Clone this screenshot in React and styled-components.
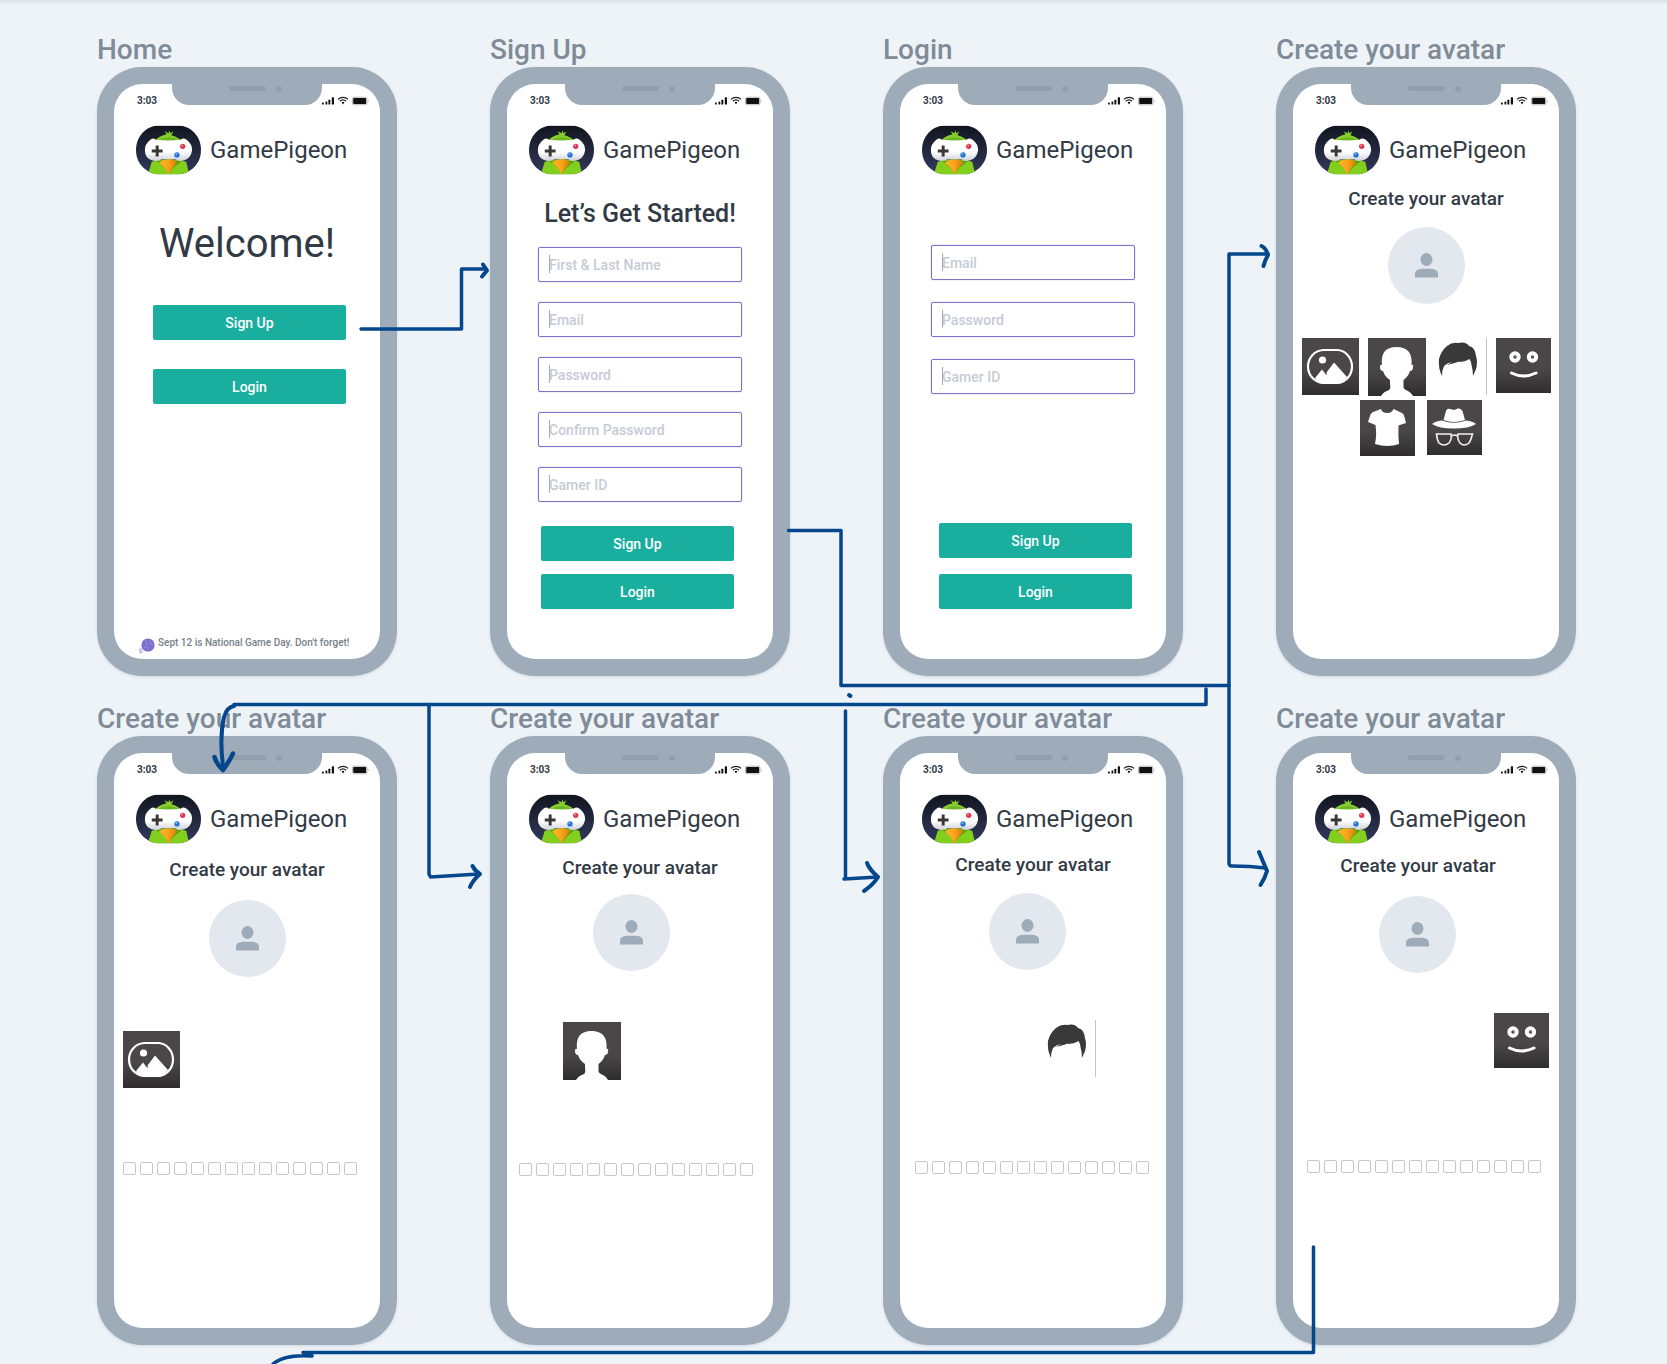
import React from "react";
import styled, { createGlobalStyle } from "styled-components";

const color = {
  canvas: "#eef3f7",
  frame: "#9eacba",
  frameDetail: "#919fad",
  label: "#808b98",
  ink: "#323a45",
  teal: "#1aae9f",
  violet: "#7f70cc",
  hint: "#c5cbd5",
  line: "#05478d",
};

const GlobalStyle = createGlobalStyle`
  * { box-sizing: border-box; }
  body {
    margin: 0;
    background: ${color.canvas};
    font-family: Roboto, "Liberation Sans", sans-serif;
    color: ${color.ink};
  }
  h1, h2, p { margin: 0; font-weight: 500; }
`;

const Board = styled.main`
  position: relative;
  overflow: hidden;
  padding: 29px 91px 19px 97px;
  background: linear-gradient(#dde2e6, ${color.canvas} 5px);
`;

const Frames = styled.div`
  display: grid;
  grid-template-columns: repeat(4, 300px);
  justify-content: space-between;
  row-gap: 22px;
`;

const FrameLabel = styled.h2`
  height: 38px;
  line-height: 41px;
  font-size: 28px;
  color: ${color.label};
  white-space: nowrap;
`;

const Phone = styled.div`
  height: 609px;
  padding: 17px;
  border-radius: 45px;
  background: ${color.frame};
  box-shadow: 0 1px 3px rgba(120, 140, 170, 0.25);
`;

const Screen = styled.div`
  display: flex;
  flex-direction: column;
  height: 100%;
  border-radius: 28px;
  overflow: hidden;
  background: #fff;
`;

const StatusBar = styled.div`
  display: grid;
  grid-template-columns: 1fr 150px 1fr;
  height: 41px;
`;

const Time = styled.span`
  padding-left: 23px;
  line-height: 34px;
  font-size: 10px;
  font-weight: 700;
`;

const Notch = styled.div`
  display: flex;
  justify-content: flex-end;
  gap: 10px;
  height: 21px;
  padding: 2px 40px 0 0;
  border-radius: 0 0 17px 17px;
  background: ${color.frame};
`;

const Speaker = styled.i`
  width: 37px;
  height: 5px;
  border-radius: 3px;
  background: ${color.frameDetail};
`;

const Camera = styled.i`
  width: 6px;
  height: 6px;
  border-radius: 50%;
  background: ${color.frameDetail};
`;

const Signals = styled.div`
  padding-top: 12px;
  svg { display: block; }
`;

const Brand = styled.div`
  display: flex;
  align-items: center;
  gap: 9px;
  height: 50px;
  padding-left: 22px;
  font-size: 24px;
  svg { display: block; }
`;

const Heading = styled.h1`
  margin-top: ${(p) => p.$top}px;
  padding-right: ${(p) => p.$right || 0}px;
  font-size: ${(p) => p.$size}px;
  font-weight: ${(p) => (p.$size > 30 ? 400 : 500)};
  line-height: ${(p) => p.$size + 8}px;
  text-align: center;
  white-space: nowrap;
`;

const Fields = styled.form`
  display: flex;
  flex-direction: column;
  gap: ${(p) => p.$gap}px;
  margin: ${(p) => p.$top}px 31px 0;
`;

const Field = styled.label`
  position: relative;
  display: block;
  height: 35px;
  &::before {
    content: "";
    position: absolute;
    left: 11px;
    top: 8px;
    width: 1px;
    height: 18px;
    background: #a4abb6;
  }
`;

const TextInput = styled.input`
  display: block;
  width: 100%;
  height: 100%;
  padding: 0 10px;
  border: 1px solid ${color.violet};
  border-radius: 2px;
  box-shadow: 0 0 1px ${color.violet};
  background: transparent;
  font: 500 14px Roboto, "Liberation Sans", sans-serif;
  color: ${color.ink};
  outline: none;
  &::placeholder { color: ${color.hint}; opacity: 1; }
`;

const Actions = styled.div`
  display: flex;
  flex-direction: column;
  gap: ${(p) => p.$gap}px;
  margin: ${(p) => p.$top}px 0 0 ${(p) => p.$left}px;
`;

const Button = styled.button`
  width: 193px;
  height: 35px;
  padding: 0;
  border: 0;
  border-radius: 2px;
  background: ${color.teal};
  font: 500 14px Roboto, "Liberation Sans", sans-serif;
  color: #fff;
`;

const Notice = styled.p`
  display: flex;
  align-items: flex-start;
  gap: 3px;
  margin: auto 0 4px 25px;
  font-size: 10px;
  line-height: 12px;
  color: #767f89;
  white-space: nowrap;
`;

const Avatar = styled.div`
  display: grid;
  place-items: center;
  width: 77px;
  height: 77px;
  margin: ${(p) => p.$top}px 0 0 ${(p) => p.$left}px;
  border-radius: 50%;
  background: #e3e7ee;
`;

const TileRow = styled.div`
  display: flex;
  gap: ${(p) => p.$gap || 9}px;
  margin: ${(p) => p.$top}px 0 0 ${(p) => p.$left}px;
`;

const Tile = styled.button`
  flex: none;
  width: ${(p) => p.$width}px;
  height: ${(p) => p.$height}px;
  padding: 0;
  border: 0;
  background: ${(p) => (p.$plain ? "none" : "linear-gradient(#4b4748 55%, #302d2e)")};
  border-right: ${(p) => (p.$plain ? "1px solid #c4c4c4" : "0")};
  svg { display: block; }
`;

const Swatches = styled.div`
  display: flex;
  gap: 4px;
  margin: auto 0 ${(p) => p.$bottom}px ${(p) => p.$left}px;
`;

const Swatch = styled.input`
  appearance: none;
  width: 13px;
  height: 13px;
  margin: 0;
  border: 1px solid #c6c6cb;
  border-radius: 2px;
  background: #fff;
`;

const Flow = styled.svg`
  position: absolute;
  left: 0;
  top: 0;
  pointer-events: none;
`;

function StatusIcons() {
  return (
    <svg width="50" height="10" viewBox="0 0 50 10" aria-hidden="true">
      <g fill="#111">
        <rect x="0" y="6.4" width="1.8" height="2.2" rx=".5" />
        <rect x="3.5" y="5.4" width="1.8" height="3.2" rx=".5" />
        <rect x="6.4" y="3.8" width="1.9" height="4.8" rx=".5" />
        <rect x="9.8" y="1.3" width="2.2" height="7.3" rx=".5" />
        <path d="M19.6 6.2a3 3 0 0 1 2.800 0l-1.400 2.200z" />
        <rect x="31.2" y="2" width="13" height="6" rx=".8" />
      </g>
      <g fill="none" stroke="#222" strokeWidth="1.2">
        <path d="M15.900 3.400a7.500 7.500 0 0 1 10.200 0M17.800 5.300a4.800 4.800 0 0 1 6.300 0" />
      </g>
      <rect x="30.4" y="1.200" width="14.600" height="7.600" rx="1.800" fill="none" stroke="#999" strokeWidth=".7" />
      <path d="M46 3.700q1.300 1.300 0 2.600z" fill="#999" />
    </svg>
  );
}

function Logo({ id }) {
  return (
    <svg width="65" height="50" viewBox="0 0 66 50" aria-hidden="true">
      <defs>
        <clipPath id={`${id}-clip`}>
          <path d="M22 0H44C56 1 66 11 66 25S56 48 44 50H22C10 48 0 39 0 25S10 1 22 0Z" />
        </clipPath>
        <linearGradient id={`${id}-night`} x2="0" y2="1">
          <stop stopColor="#11151f" />
          <stop offset="1" stopColor="#333a5c" />
        </linearGradient>
        <linearGradient id={`${id}-pad`} x2="0" y2="1">
          <stop offset=".6" stopColor="#fff" />
          <stop offset="1" stopColor="#cfd1d8" />
        </linearGradient>
        <linearGradient id={`${id}-beak`} x2="1" y2="0">
          <stop stopColor="#ffb52c" />
          <stop offset=".5" stopColor="#f9a51a" />
          <stop offset="1" stopColor="#d97a0a" />
        </linearGradient>
      </defs>
      <g clipPath={`url(#${id}-clip)`}>
        <rect width="66" height="50" fill={`url(#${id}-night)`} />
        <path d="M18 17Q22 11 31 9L29 6L33 8L34 5L35 8L38 6L36 10Q44 12 48 18Z" fill="#86cf2a" />
        <path d="M24 14Q33 10 42 14L40 16H26Z" fill="#6cb524" />
        <path d="M12 50L16 37Q33 32 51 37L54 50Z" fill="#83cf1d" />
        <path d="M20 36L29 43L33 49.500L38 43L47 36Z" fill="#5da010" />
        <path d="M14 15Q17 12 20 14.500Q33 16 45 14.500Q49 12 52 15Q57 19 57 25Q56 33 49 35.500Q43 37 40 34.500H26Q22 37 16 35.500Q9 33 9 25Q9 19 14 15Z" fill={`url(#${id}-pad)`} />
        <path d="M23 38Q28 34.500 33 34.500Q38 34.500 42 38Q37 42 33 50Q29 42 23 38Z" fill={`url(#${id}-beak)`} />
        <path d="M20 20.500H23V24.500H27V27.500H23V31.500H20V27.500H16V24.500H20Z" fill="#3b3737" />
        <circle cx="47.400" cy="21.300" r="2.700" fill="#df3551" />
        <circle cx="46.700" cy="20.400" r=".9" fill="#ffa0ae" />
        <circle cx="41.600" cy="30" r="2.700" fill="#2374d2" />
        <circle cx="41" cy="29.100" r=".9" fill="#8fc5ff" />
      </g>
    </svg>
  );
}

function PersonIcon() {
  return (
    <svg width="23" height="25" viewBox="0 0 23 25" aria-hidden="true">
      <ellipse cx="11.5" cy="6.5" rx="6" ry="6.5" fill={color.frame} />
      <path d="M0 24.5V21Q0 16 7 15.7H16Q23 16 23 21V24.5Z" fill={color.frame} />
    </svg>
  );
}

function SceneryArt() {
  return (
    <svg width="57" height="57" viewBox="0 0 57 57" aria-hidden="true">
      <path d="M21 12H36C44 13 50 20 50 28.5S44 44 36 45H21C12 44 6 37 6 28.5S12 13 21 12Z" fill="none" stroke="#fff" strokeWidth="2.2" />
      <circle cx="20.5" cy="22" r="3.6" fill="#fff" />
      <path d="M13 40L20 31.5L23.5 36L25 37L24.5 34.5L32 24.5L45 39L40 44Q37 46 34 46H21Q16 45 13 40Z" fill="#fff" />
    </svg>
  );
}

function HeadArt() {
  return (
    <svg width="58" height="58" viewBox="0 0 58 58" aria-hidden="true">
      <path d="M13 58Q15 54 21 52Q23 50 22 46L22 42Q17 39 15 33Q12 33 12 29Q12 26 14 27Q12 9 28.5 9Q45 9 43.5 27Q46 26 45 29Q45 33 42 33Q40 39 35.5 42V47Q35 51 38 52Q43 54 45 58Z" fill="#fff" />
    </svg>
  );
}

function HairArt() {
  return (
    <svg width="51" height="57" viewBox="0 0 51 57" aria-hidden="true">
      <path d="M7 38Q3 30 4 21Q6 13 12 8Q17 4 23 5Q31 3 34 8Q40 9 41 18Q43 24 41 31L38 38Q38 32 36.5 27Q36 23 34.5 21Q30 24 23 24L29 20.5Q22 25 12 27L17 24Q12 25 9 28Q7 32 7 38Z" fill="#393939" />
    </svg>
  );
}

function FaceArt() {
  return (
    <svg width="55" height="55" viewBox="0 0 55 55" aria-hidden="true">
      <g fill="none" stroke="#fff">
        <circle cx="19" cy="19" r="3.7" strokeWidth="4" />
        <circle cx="36.5" cy="19" r="3.7" strokeWidth="4" />
        <path d="M15.5 35Q27.5 41 40 35" strokeWidth="3" strokeLinecap="round" />
      </g>
      <g fill="#777"><circle cx="19.5" cy="18.5" r="1" /><circle cx="36.5" cy="18.5" r="1" /></g>
    </svg>
  );
}

function ShirtArt() {
  return (
    <svg width="55" height="56" viewBox="0 0 55 56" aria-hidden="true">
      <path d="M21 9Q22 13 27.5 13Q32 13 33.5 9L42 13Q44 14 44.5 17L46 23L38.5 25.5Q38 35 39 44Q28 48 15 44Q17 35 15.5 25L8 22L10.5 14.5Q11 13 13 12Z" fill="#fff" />
    </svg>
  );
}

function HatArt() {
  return (
    <svg width="55" height="55" viewBox="0 0 55 55" aria-hidden="true">
      <path d="M16.5 20L19 11Q20 8 23 9L27 10L31 8.5Q34 8 35.5 11L38 20Q27 24 16.5 20Z" fill="#fff" />
      <path d="M5 24Q8 21 15 20.5Q27 25 39 20.5Q46 21 49 24Q42 28.5 27 28.5Q12 28.5 5 24Z" fill="#fff" />
      <g fill="none" stroke="#f1f1f1" strokeWidth="1.6">
        <path d="M9.5 34H24Q25 39 22 43Q17 47 12 43Q10 40 9.5 34ZM31 34H45.5Q44 40 42 43Q37 47 33 43Q30 39 31 34ZM24.5 36Q27.5 34 30.5 36" />
      </g>
    </svg>
  );
}

function BubbleIcon() {
  return (
    <svg width="16" height="18" viewBox="0 0 16 18" aria-hidden="true">
      <circle cx="9" cy="8" r="6.6" fill="#7c6fd0" />
      <path d="M6 3L8 5.5L7 8.5M10 3.5L11.5 6.5L14 8M5 10.5L8 10L10 12.5" fill="none" stroke="#a59ce6" strokeWidth=".7" />
      <path d="M3.6 12H.8V14H2.5Q3.8 14 3.3 15.2Q2.6 16 .5 15.6" fill="none" stroke="#9a93cf" strokeWidth=".9" />
    </svg>
  );
}

const art = {
  scenery: { label: "Background", Art: SceneryArt, width: 57, height: 57 },
  head: { label: "Face shape", Art: HeadArt, width: 58, height: 58 },
  hair: { label: "Hair", Art: HairArt, width: 52, height: 57, plain: true },
  face: { label: "Expression", Art: FaceArt, width: 55, height: 55 },
  shirt: { label: "Clothes", Art: ShirtArt, width: 55, height: 56 },
  hat: { label: "Accessories", Art: HatArt, width: 55, height: 55 },
};

function ArtTile({ name }) {
  const { label, Art, width, height, plain } = art[name];
  return (
    <Tile type="button" aria-label={label} $width={width} $height={height} $plain={plain}>
      <Art />
    </Tile>
  );
}

function PhoneFrame({ id, title, children }) {
  return (
    <section>
      <FrameLabel>{title}</FrameLabel>
      <Phone>
        <Screen>
          <StatusBar>
            <Time>3:03</Time>
            <Notch><Speaker /><Camera /></Notch>
            <Signals><StatusIcons /></Signals>
          </StatusBar>
          <Brand><Logo id={id} /><span>GamePigeon</span></Brand>
          {children}
        </Screen>
      </Phone>
    </section>
  );
}

function FieldList({ names, top, gap }) {
  return (
    <Fields $top={top} $gap={gap}>
      {names.map((name) => (
        <Field key={name}>
          <TextInput
            type={name.includes("Password") ? "password" : "text"}
            placeholder={name}
            aria-label={name}
          />
        </Field>
      ))}
    </Fields>
  );
}

function EntryButtons({ top, gap, left }) {
  return (
    <Actions $top={top} $gap={gap} $left={left}>
      <Button type="button">Sign Up</Button>
      <Button type="button">Login</Button>
    </Actions>
  );
}

const avatarSteps = [
  { id: "p5", tile: "scenery", headTop: 12, avatarTop: 17, avatarLeft: 95, tileTop: 54, tileLeft: 9, swatchLeft: 9, bottom: 153 },
  { id: "p6", tile: "head", headTop: 10, avatarTop: 13, avatarLeft: 86, tileTop: 51, tileLeft: 56, swatchLeft: 12, bottom: 152 },
  { id: "p7", tile: "hair", headTop: 7, avatarTop: 15, avatarLeft: 89, tileTop: 50, tileLeft: 144, swatchLeft: 15, bottom: 154 },
  { id: "p8", tile: "face", headTop: 8, headRight: 16, avatarTop: 17, avatarLeft: 86, tileTop: 40, tileLeft: 201, swatchLeft: 14, bottom: 155 },
];

function AvatarStep({ step }) {
  return (
    <PhoneFrame id={step.id} title="Create your avatar">
      <Heading $size={19} $top={step.headTop} $right={step.headRight}>Create your avatar</Heading>
      <Avatar $top={step.avatarTop} $left={step.avatarLeft}><PersonIcon /></Avatar>
      <TileRow $top={step.tileTop} $left={step.tileLeft}><ArtTile name={step.tile} /></TileRow>
      <Swatches $left={step.swatchLeft} $bottom={step.bottom}>
        {Array.from({ length: 14 }, (_, i) => (
          <Swatch key={i} type="checkbox" aria-label={`Option ${i + 1}`} />
        ))}
      </Swatches>
    </PhoneFrame>
  );
}

function FlowLines() {
  return (
    <Flow width="1667" height="1364" viewBox="0 0 1667 1364" aria-hidden="true">
      <g fill="none" stroke={color.line} strokeWidth="3.5" strokeLinecap="round" strokeLinejoin="round">
        <path d="M361 329H461.5V269H486" />
        <path d="M483 264.5L487 270.5L482 276.5" strokeWidth="4" />
        <path d="M788.5 530.5H841V685.5H1229" />
        <path d="M849 695L850.5 696" strokeWidth="4" />
        <path d="M1268 254H1229V863Q1229 866 1232 866L1250 866.5L1265 868" />
        <path d="M1261.500 246Q1266 248 1268 255Q1265 260 1263.500 266" strokeWidth="4" />
        <path d="M1259 852L1267 871Q1265 878 1260.500 885" strokeWidth="4" />
        <path d="M1206 689V704.500H234" />
        <path d="M234 706Q227 707 224 717Q219 739 223.500 769" strokeWidth="4" />
        <path d="M214.500 757Q217 765 223 770Q229 762 233 753.500" strokeWidth="4.500" />
        <path d="M429 704.500V874L430.500 877L479 874" />
        <path d="M472.500 866Q475 871 480 874Q473 880 470 887" strokeWidth="4" />
        <path d="M845.500 711V878M844 879L878 877" />
        <path d="M867 863Q869 869 878 877Q873 885 864 891" strokeWidth="4" />
        <path d="M1313.500 1247V1352.500H303L312 1356Q284 1354 273 1364" />
      </g>
    </Flow>
  );
}

export default function App() {
  return (
    <>
      <GlobalStyle />
      <Board>
        <Frames>
          <PhoneFrame id="p1" title="Home">
            <Heading $size={40} $top={45}>Welcome!</Heading>
            <EntryButtons top={37} gap={29} left={39} />
            <Notice><BubbleIcon />Sept 12 is National Game Day. Don't forget!</Notice>
          </PhoneFrame>
          <PhoneFrame id="p2" title="Sign Up">
            <Heading $size={25} $top={22}>Let’s Get Started!</Heading>
            <FieldList names={["First & Last Name", "Email", "Password", "Confirm Password", "Gamer ID"]} top={17} gap={20} />
            <EntryButtons top={24} gap={13} left={34} />
          </PhoneFrame>
          <PhoneFrame id="p3" title="Login">
            <FieldList names={["Email", "Password", "Gamer ID"]} top={70} gap={22} />
            <EntryButtons top={129} gap={16} left={39} />
          </PhoneFrame>
          <PhoneFrame id="p4" title="Create your avatar">
            <Heading $size={19} $top={10}>Create your avatar</Heading>
            <Avatar $top={15} $left={95}><PersonIcon /></Avatar>
            <TileRow $top={34} $left={9}>
              <ArtTile name="scenery" />
              <ArtTile name="head" />
              <ArtTile name="hair" />
              <ArtTile name="face" />
            </TileRow>
            <TileRow $top={4} $left={67} $gap={12}>
              <ArtTile name="shirt" />
              <ArtTile name="hat" />
            </TileRow>
          </PhoneFrame>
          {avatarSteps.map((step) => <AvatarStep key={step.id} step={step} />)}
        </Frames>
        <FlowLines />
      </Board>
    </>
  );
}
